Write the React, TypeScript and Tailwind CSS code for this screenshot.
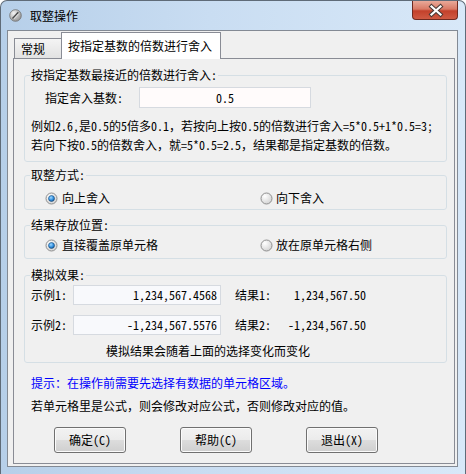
import React from 'react';

function Radio({ checked }: { checked?: boolean }) {
  return (
    <svg width="13" height="13" viewBox="0 0 13 13" className="shrink-0">
      <defs>
        <radialGradient id="rfill" cx="0.35" cy="0.3" r="0.8">
          <stop offset="0" stopColor="#ffffff" />
          <stop offset="1" stopColor="#cfcfcf" />
        </radialGradient>
        <radialGradient id="rdot" cx="0.4" cy="0.35" r="0.7">
          <stop offset="0" stopColor="#9fd8ff" />
          <stop offset="0.6" stopColor="#2f8ee0" />
          <stop offset="1" stopColor="#12497d" />
        </radialGradient>
      </defs>
      <circle cx="6.5" cy="6.5" r="5.5" fill="url(#rfill)" stroke="#8f8f8f" strokeWidth="1" />
      {checked && <circle cx="6.5" cy="6.5" r="3" fill="url(#rdot)" stroke="#1b4f80" strokeWidth="0.6" />}
    </svg>
  );
}

function Group({ title, className, children }: { title: string; className: string; children: React.ReactNode }) {
  return (
    <fieldset className={`w-[423px] rounded-[3px] border border-[#d5dfe5] ${className}`}>
      <legend className="ml-[5px] px-px leading-[16px]">{title}</legend>
      {children}
    </fieldset>
  );
}

function Btn({ label }: { label: string }) {
  return (
    <div className="flex h-[26px] w-[72px] items-center justify-center rounded-[3px] border border-[#707070] bg-[linear-gradient(#f2f2f2_0%,#ebebeb_50%,#dddddd_50%,#cfcfcf_100%)] shadow-[inset_0_0_0_1px_#fbfbfb]">
      {label}
    </div>
  );
}

export default function App() {
  return (
    <div className="h-[474px] w-[466px] overflow-hidden rounded-t-[7px] border-x border-t border-[#5f6b78] bg-[linear-gradient(to_right,#b6cfe9,#c9ddf2_45%,#d8e8f8)] font-['Noto_Sans_Mono_CJK_SC','Noto_Sans_CJK_SC',sans-serif] text-[12px] leading-[16px] text-black">
      {/* Title bar */}
      <div className="flex h-[29px] items-start">
        <div className="flex h-[29px] items-center gap-[8px] pl-[8px]">
          <svg width="13" height="13" viewBox="0 0 13 13">
            <defs>
              <radialGradient id="ico" cx="0.35" cy="0.3" r="0.8">
                <stop offset="0" stopColor="#f4f4f4" />
                <stop offset="1" stopColor="#8c8c8c" />
              </radialGradient>
            </defs>
            <circle cx="6.5" cy="6.5" r="5.8" fill="url(#ico)" stroke="#6e6e6e" strokeWidth="0.8" />
            <path d="M3.6 9.6 L9.4 3.4" stroke="#4a4a4a" strokeWidth="1.6" />
            <path d="M4.6 10 L9.8 4.4" stroke="#ffffff" strokeWidth="0.8" />
          </svg>
          <span>取整操作</span>
        </div>
        <div className="ml-auto mr-[7px] h-[19px] w-[46px] overflow-hidden rounded-b-[4px] border-x border-b border-[#6e2a20] bg-[linear-gradient(#e9a999_0%,#d97a66_45%,#c3412b_55%,#cf5a43_100%)]">
          <svg width="46" height="19" viewBox="0 0 46 19">
            <path d="M18.5 5.5 L27.5 13.5 M27.5 5.5 L18.5 13.5" stroke="#4a3a36" strokeWidth="4.2" strokeLinecap="square" />
            <path d="M18.5 5.5 L27.5 13.5 M27.5 5.5 L18.5 13.5" stroke="#ffffff" strokeWidth="2.2" strokeLinecap="square" />
          </svg>
        </div>
      </div>

      {/* Client area */}
      <div className="ml-[6px] h-[437px] w-[451px] border border-[#838a94] bg-[#f0f0f0]">
        {/* Tabs */}
        <div className="ml-[6px] mt-[1px] flex items-end">
          <div className="flex h-[20px] w-[47px] items-center border-l border-t border-[#898c95] bg-[linear-gradient(#f4f4f4,#e2e2e2)] pl-[6px]">
            常规
          </div>
          <div className="relative z-10 -mb-px h-[27px] w-[160px] border-x border-t border-[#898c95] bg-white pl-[6px] pt-[5px]">
            按指定基数的倍数进行舍入
          </div>
        </div>

        {/* Tab panel */}
        <div className="ml-[5px] h-[406px] w-[442px] border border-[#898c95] bg-[#f0f0f0] pl-[10px] pt-[8px]">
          <Group title="按指定基数最接近的倍数进行舍入:" className="pb-[7px]">
            <div className="mt-[4px] flex h-[21px] items-center pl-[20px]">
              <span className="w-[94px]">指定舍入基数:</span>
              <div className="flex h-[21px] w-[172px] items-center justify-center border border-[#d6dae0] bg-[#fffbfb]">
                0.5
              </div>
            </div>
            <div className="mt-[8px] whitespace-nowrap pl-[6px] leading-[19px]">
              <div>例如2.6,是0.5的5倍多0.1，若按向上按0.5的倍数进行舍入=5*0.5+1*0.5=3;</div>
              <div>若向下按0.5的倍数舍入，就=5*0.5=2.5，结果都是指定基数的倍数。</div>
            </div>
          </Group>

          <Group title="取整方式:" className="mt-[5px] pb-[3px]">
            <div className="mt-[7px] flex h-[16px] items-center pl-[20px]">
              <div className="flex w-[215px] items-center gap-[4px]">
                <Radio checked />
                <span>向上舍入</span>
              </div>
              <div className="flex items-center gap-[3px]">
                <Radio />
                <span>向下舍入</span>
              </div>
            </div>
          </Group>

          <Group title="结果存放位置:" className="mt-[7px] pb-[5px]">
            <div className="mt-[4px] flex h-[16px] items-center pl-[20px]">
              <div className="flex w-[215px] items-center gap-[4px]">
                <Radio checked />
                <span>直接覆盖原单元格</span>
              </div>
              <div className="flex items-center gap-[3px]">
                <Radio />
                <span>放在原单元格右侧</span>
              </div>
            </div>
          </Group>

          <Group title="模拟效果:" className="mt-[8px] pb-[3px]">
            <div className="mt-[2px] flex h-[20px] items-center pl-[6px]">
              <span className="w-[42px]">示例1:</span>
              <div className="flex h-[20px] w-[148px] items-center justify-end border border-[#d6dae0] bg-[#f8f9fc] pr-[3px]">
                1,234,567.4568
              </div>
              <span className="ml-[14px] w-[52px]">结果1:</span>
              <span className="w-[79px] text-right">1,234,567.50</span>
            </div>
            <div className="mt-[10px] flex h-[20px] items-center pl-[6px]">
              <span className="w-[42px]">示例2:</span>
              <div className="flex h-[20px] w-[148px] items-center justify-end border border-[#d6dae0] bg-[#f8f9fc] pr-[3px]">
                -1,234,567.5576
              </div>
              <span className="ml-[14px] w-[52px]">结果2:</span>
              <span className="w-[79px] text-right">-1,234,567.50</span>
            </div>
            <div className="mt-[8px] pl-[81px]">模拟结果会随着上面的选择变化而变化</div>
          </Group>

          <div className="ml-[7px] mt-[12px] text-[#0000ff]">提示：在操作前需要先选择有数据的单元格区域。</div>
          <div className="ml-[7px] mt-[7px]">若单元格里是公式，则会修改对应公式，否则修改对应的值。</div>

          <div className="ml-[30px] mt-[13px] flex gap-[54px]">
            <Btn label="确定(C)" />
            <Btn label="帮助(C)" />
            <Btn label="退出(X)" />
          </div>
        </div>
      </div>
    </div>
  );
}
